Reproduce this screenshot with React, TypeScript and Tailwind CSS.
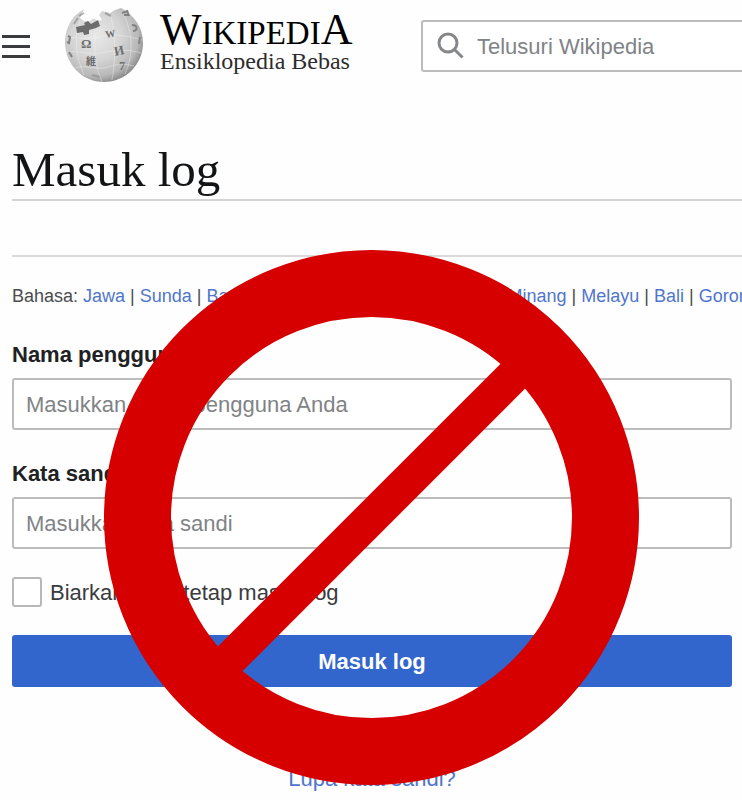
import React from 'react';

const languages = ['Jawa', 'Sunda', 'Banyumasan', 'Bugis', 'Banjar', 'Aceh', 'Minang', 'Melayu', 'Bali', 'Gorontalo'];

const fieldClass =
  'block h-[52px] w-full rounded-[3px] border-2 border-[#bcbcbc] bg-white px-3 pt-0.5 text-[22px] text-[#202122] placeholder:text-[#808386] placeholder:opacity-100 outline-none focus:border-[#3366cc]';

function Globe() {
  return (
    <svg viewBox="0 0 80 76" className="h-[76px] w-20 shrink-0" aria-hidden="true">
      <defs>
        <radialGradient id="globe-shade" cx="0.4" cy="0.38" r="0.66">
          <stop offset="0" stopColor="#e9e9e9" />
          <stop offset="0.5" stopColor="#d4d4d4" />
          <stop offset="0.82" stopColor="#b8b8b8" />
          <stop offset="1" stopColor="#858585" />
        </radialGradient>
      </defs>
      <path
        d="M20 2 L13 7 C5 14 1 25 1 35 C1 57 18 75 40 75 C62 75 79 57 79 36 C79 20 70 8 57 1 L51 3 L46 6 L38 4 L35 8 L38 13 L33 14 L30 11 L26 14 L20 14 L16 11 Z"
        fill="url(#globe-shade)"
      />
      <g fill="none" stroke="#f4f4f4" strokeOpacity="0.5" strokeWidth="0.8">
        <path d="M2 31 C15 29 25 34 35 30 S60 28 78 33" />
        <path d="M3 45 C16 43 24 49 37 46 S65 42 77 46" />
        <path d="M11 61 C23 57 32 64 44 60 S62 57 70 59" />
        <path d="M16 14 C10 28 11 47 20 68" />
        <path d="M32 25 C29 42 31 59 38 75" />
        <path d="M45 5 C52 22 52 50 48 73" />
        <path d="M58 4 C69 24 70 48 61 67" />
      </g>
      <path d="M12 20 L21 18 L20 16 L24 14 L27 17 L34 13 L36 19 L32 21 L25 23 L25 27 L20 28 L19 25 L13 26 Z" fill="#6c6c6c" />
      <g fill="#6e6e6e" fontFamily="'Liberation Serif', serif" fontSize="12" fontWeight="700">
        <text x="17" y="41" fontSize="13">Ω</text>
        <text x="42" y="31" fontSize="10" transform="rotate(-10 42 31)">W</text>
        <text x="51" y="49" fontSize="13" transform="rotate(-12 51 49)">И</text>
        <text x="22" y="58" fontFamily="'Noto Sans CJK JP', sans-serif" fontSize="10">維</text>
        <text x="55" y="63" fontSize="12">7</text>
      </g>
      <g fill="none" stroke="#828282" strokeWidth="2">
        <path d="M58 6 L64 4 M60 8 L65 8 M63 3 L65 9" />
        <path d="M68 18 C74 18 74 24 69 24" />
        <path d="M76 30 L75 37" />
        <path d="M4 29 L6 30 L5 36 L3 35" />
        <path d="M5 45 L8 50" />
        <path d="M10 17 L14 11 M15 9 L20 6" strokeOpacity="0.6" />
        <path d="M41 6 L47 9" strokeOpacity="0.6" />
        <path d="M28 68 L36 70" strokeOpacity="0.5" />
      </g>
    </svg>
  );
}

function ProhibitionSign() {
  return (
    <svg
      viewBox="0 0 536 536"
      className="pointer-events-none absolute inset-x-0 top-[250px] mx-auto h-[536px] w-[536px]"
      fill="none"
      stroke="#d60000"
      aria-hidden="true"
    >
      <circle cx="268.5" cy="267.5" r="234" strokeWidth="67" />
      <path d="M415 121 L122 414" strokeWidth="35" />
    </svg>
  );
}

export default function App() {
  return (
    <div className="relative min-h-screen overflow-hidden bg-[#fefefe] font-['Liberation_Sans',Arial,sans-serif] text-[#202122]">
      <header className="flex h-[92px] items-center">
        <button type="button" aria-label="Menu" className="ml-0.5 flex w-7 shrink-0 flex-col gap-[7px]">
          <span className="h-[3px] w-full bg-[#3a3b3d]" />
          <span className="h-[3px] w-full bg-[#3a3b3d]" />
          <span className="h-[3px] w-full bg-[#3a3b3d]" />
        </button>
        <a href="#beranda" className="ml-[34px] flex w-[357px] shrink-0 items-center gap-4 pb-0.5 font-['Liberation_Serif',serif]">
          <Globe />
          <span className="block pb-1 whitespace-nowrap">
            <span className="block text-[33px] leading-8 text-black">
              <span className="text-[44px] leading-8">W</span>IKIPEDI<span className="text-[44px] leading-8">A</span>
            </span>
            <span className="block text-[24px] leading-6 text-[#2c2c2c]">Ensiklopedia Bebas</span>
          </span>
        </a>
        <label className="flex h-[52px] min-w-0 flex-1 items-center gap-3 rounded-l-[3px] border-2 border-r-0 border-[#bcbcbc] bg-white pl-3.5">
          <svg viewBox="0 0 28 28" className="size-7 shrink-0" fill="none" stroke="#85878a" strokeWidth="3" aria-hidden="true">
            <circle cx="11" cy="11" r="9" />
            <path d="M17.5 17.5 L25.5 25.5" />
          </svg>
          <input
            type="search"
            aria-label="Telusuri Wikipedia"
            placeholder="Telusuri Wikipedia"
            className="w-full min-w-0 bg-transparent text-[22px] outline-none placeholder:text-[#808386] placeholder:opacity-100"
          />
        </label>
      </header>

      <main className="pl-3">
        <h1 className="mt-12 h-[61px] border-b-2 border-[#d4d4d4] font-['Liberation_Serif',serif] text-[49px] leading-[60px] text-[#121416]">
          Masuk log
        </h1>
        <div className="h-14 border-b-2 border-[#dadada]" />
        <nav className="mt-[27px] overflow-hidden text-[18px] leading-6 whitespace-nowrap text-[#4a4b4d]" aria-label="Bahasa">
          Bahasa:{' '}
          {languages.map((name, i) => (
            <React.Fragment key={name}>
              {i > 0 && ' | '}
              <a href={'#' + name} className="text-[#5076cb]">{name}</a>
            </React.Fragment>
          ))}
        </nav>

        <form className="mt-[33px] pr-[10px]" onSubmit={(e) => e.preventDefault()}>
          <label htmlFor="username" className="block pb-[9px] text-[22px] leading-7 font-bold">
            Nama pengguna
          </label>
          <input id="username" type="text" placeholder="Masukkan nama pengguna Anda" className={fieldClass} />
          <label htmlFor="password" className="mt-[30px] block pb-[9px] text-[22px] leading-7 font-bold">
            Kata sandi
          </label>
          <input id="password" type="password" placeholder="Masukkan kata sandi" className={fieldClass} />
          <div className="mt-7 flex items-center gap-2">
            <input
              id="remember"
              type="checkbox"
              className="size-[30px] shrink-0 appearance-none rounded-[3px] border-2 border-[#b8b8b8] bg-white checked:bg-[#3366cc]"
            />
            <label htmlFor="remember" className="pt-0.5 text-[22px] leading-7 text-[#3a3b3d]">
              Biarkan saya tetap masuk log
            </label>
          </div>
          <button type="submit" className="mt-7 block h-[52px] w-full rounded-[3px] bg-[#3366cc] text-[22px] font-bold text-white">
            Masuk log
          </button>
          <div className="mt-[78px] text-center text-[22px] leading-7">
            <a href="#lupa" className="text-[#5076cb]">Lupa kata sandi?</a>
          </div>
        </form>
      </main>
      <ProhibitionSign />
    </div>
  );
}
